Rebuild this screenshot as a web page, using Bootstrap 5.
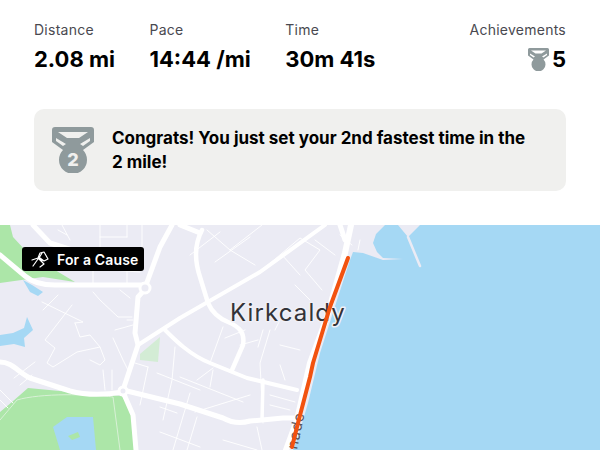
<!DOCTYPE html>
<html lang="en"><head><meta charset="utf-8"><title>Activity</title>
<link href="https://cdn.jsdelivr.net/npm/bootstrap@5.3.0/dist/css/bootstrap.min.css" rel="stylesheet">
<style>
html,body{width:600px;height:450px;overflow:hidden;background:#fff}
body{font-family:Inter,"Liberation Sans",sans-serif;color:#000}
.sheet{padding:20px 34px 34px}
.stat-row{column-gap:34.500px}
.stat-label{font-size:14px;line-height:20px;color:#494950;letter-spacing:.25px}
.stat-value{font-size:22px;line-height:28px;font-weight:700;margin-top:5px;white-space:nowrap;color:#000;letter-spacing:0}
.medal-small{width:21px;height:23px}
.medal-gap{column-gap:3px}
.congrats{margin-top:36px;height:82px;background:#f0f0ee;border-radius:10px;padding:0 18px;column-gap:18px}
.medal-big{width:42px;height:46px;flex:none}
.congrats-text{font-size:17px;line-height:24px;font-weight:700;margin:0;color:#000}
.map-wrap{height:225px;overflow:hidden;position:relative}
.map-art{display:block;width:600px;height:225px}
.cause{position:absolute;left:22px;top:22px;height:24px;width:122px;background:#000;color:#fff;border-radius:3px;font-size:14px;font-weight:600;letter-spacing:.15px;padding-left:9px;column-gap:8px}
.cause svg{width:18px;height:17px;flex:none}
.place{font-family:Inter,"Liberation Sans",sans-serif;fill:#333338;stroke:#f0f0f7;stroke-width:3px;paint-order:stroke}
</style></head><body>
<div class="sheet">
 <div class="d-flex stat-row">
  <div><div class="stat-label">Distance</div><div class="stat-value">2.08 mi</div></div>
  <div><div class="stat-label">Pace</div><div class="stat-value">14:44 /mi</div></div>
  <div><div class="stat-label">Time</div><div class="stat-value">30m 41s</div></div>
  <div class="ms-auto text-end"><div class="stat-label">Achievements</div>
   <div class="stat-value d-flex justify-content-end align-items-center medal-gap">
    <svg class="medal-small" viewBox="0 0 42 46"><path fill="#8f9a9c" fill-rule="evenodd" d="M3 0H39a3 3 0 0 1 3 3V15L31 23A14 14 0 1 1 11 23L0 15V3A3 3 0 0 1 3 0ZM6 5H36L27 11H15ZM4 11V14L11 19 14 17ZM38 11 28 17 31 19 38 14Z"/></svg>
    <span>5</span></div></div>
 </div>
 <div class="congrats d-flex align-items-center">
  <svg class="medal-big" viewBox="0 0 42 46"><path fill="#8f9a9c" fill-rule="evenodd" d="M3 0H39a3 3 0 0 1 3 3V15L31 23A14 14 0 1 1 11 23L0 15V3A3 3 0 0 1 3 0ZM6 5H36L27 11H15ZM4 11V14L11 19 14 17ZM38 11 28 17 31 19 38 14Z"/><text x="21" y="38.500" text-anchor="middle" font-family="Inter,sans-serif" font-size="18" font-weight="800" fill="#f0f0ee">2</text></svg>
  <p class="congrats-text">Congrats! You just set your 2nd fastest time in the 2&nbsp;mile!</p>
 </div>
</div>
<div class="map-wrap">
 <svg class="map-art" viewBox="0 225 600 225" fill="none" stroke-linecap="round" stroke-linejoin="round">
  <rect x="0" y="225" width="600" height="225" fill="#ebebf4"/>
  <path fill="#ace6a8" d="M0 225H10L13 237 25 250 50 267 75 282 43 277 0 283Z"/>
  <path fill="#ace6a8" d="M0 412 12 402 28 388 70 392 122 396 133 415 137 450H0Z"/>
  <path fill="#d3ecd5" d="M140 354 160 337 158 362 140 360Z"/>
  <path fill="#a5d8f4" d="M385 225 376 234 373 243 377 252 383 258 403 259 383 260 363 253 353 252 350 260 337 300 320 353 308 403 298 437 293 450H600V225H420L408 237 398 225Z"/>
  <path stroke="#ebebf4" stroke-width="2.500" d="M408 237 420 266"/>
  <path fill="#a5d8f4" d="M23 280 32 285 43 292 38 296 30 292ZM27 317 33 330 24 338 25 347 14 344 0 346V335L13 333 24 328Z"/>
  <path fill="#a5d8f4" d="M53 427 67 417 93 417 96 450H60Z"/>
  <path fill="#ace6a8" d="M68 436 78 432 80 437 72 440Z"/>
  <path stroke="#d8f0d6" stroke-width="1" d="M0 420 17 400C40 393 90 394 113 397L120 450"/>
  <g stroke="#fff" stroke-width="1" stroke-opacity=".9">
   <path d="M43 310 58 295M42 302 83 322 75 323M72 305 45 340 55 348 47 363 53 367 77 352 100 347 105 360 100 365 90 360M75 323 80 337 90 335 100 347"/>
   <path d="M93 292 100 300 118 317H132M113 338 123 360 128 370M103 370 105 390M112 370V390M120 290 130 298M115 330 133 325M127 320H133"/>
   <path d="M148 367 140 405M135 363 148 367M175 347 172 380 163 420M157 373 200 390M160 407 177 413M160 432 200 447M190 393 173 450"/>
   <path d="M0 390 13 403M0 400 8 408M14 378 35 362M20 385 32 375"/>
   <path d="M58 230 67 235M100 225V247M127 225V237M100 237H127M142 225V250M93 255V285M127 250V285M110 270 140 272 M62 225 70 240"/>
   <path d="M207 230 230 250 255 265M230 250 262 225M190 255 220 232M215 262 250 237M268 265 300 238 320 250 305 270 322 290M282 255 300 275M315 240 335 255M340 235 352 245M360 240 358 250M295 285 310 300"/>
   <path d="M223 327 210 363M263 330 258 347M270 330 260 363 263 423M180 377 243 402M213 370 210 387M197 380 213 368M187 450 197 417M257 427 262 450M223 440 257 450M240 345 258 340M225 338 245 330M280 365 285 380M280 345 300 350M285 310 275 330M195 412 250 395M270 395 295 402M270 405 290 410"/>
  </g>
  <g stroke="#fff" stroke-width="5">
   <path d="M0 255 25 276C33 283 42 285 55 285H145"/>
   <path d="M33 225 50 243 72 250M180 225 200 233"/>
   <path d="M146 285 160 247 172 225"/>
   <path d="M146 288 138 297 135 333 138 345 123 390"/>
   <path d="M138 345 180 318 260 272 325 225" stroke-width="4"/>
   <path d="M0 362C12 362 18 372 30 378L70 391C85 395 105 395 123 392"/>
   <path d="M123 390 180 404 223 418C232 423 240 424 250 421L283 418H300"/>
   <path d="M123 392 133 415 136 450"/>
   <path d="M202 230C194 245 195 262 200 277L208 303C212 312 218 318 228 322 240 327 245 333 243 345L232 370" stroke-width="4.500"/>
   <path d="M165 330C175 340 190 355 210 363L247 378 297 390" stroke-width="4"/>
   <path d="M263 380 262 420" stroke-width="3.500"/>
   <path d="M351 225 345 253 327 317 310 363 297 420 286 450" stroke-width="6"/>
   <path d="M340 225 345 240"/>
  </g>
  <circle cx="145" cy="288" r="5" fill="#ebebf4" stroke="#fff" stroke-width="3"/>
  <circle cx="123" cy="391" r="4" fill="#ebebf4" stroke="#fff" stroke-width="3"/>
  <text class="place" x="230" y="321" font-size="24" letter-spacing="1.100">Kirkcaldy</text>
  <text transform="translate(297 450) rotate(-78)" font-family="Inter,sans-serif" font-size="15" fill="#55555c" letter-spacing=".5">nade</text>
  <path stroke="#f2520f" stroke-width="4" d="M348 258 330 307 313 363 310 377 298 423 292 447"/>
 </svg>
 <div class="cause d-flex align-items-center">
  <svg viewBox="0 0 18 17" stroke="#fff" fill="none" stroke-width="1.200" stroke-linecap="round" stroke-linejoin="round"><path d="M1 9 7 7 11 10M7 7 9 2 13 1 17 8 13 10 9 7M11 2 8 7M7 8 2 15M8 8 13 13 9 16"/></svg>
  <span>For a Cause</span>
 </div>
</div>
</body></html>
